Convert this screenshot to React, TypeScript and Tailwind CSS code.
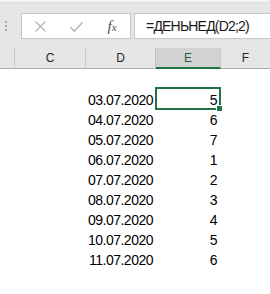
import React from "react";

const dates = [
  "03.07.2020",
  "04.07.2020",
  "05.07.2020",
  "06.07.2020",
  "07.07.2020",
  "08.07.2020",
  "09.07.2020",
  "10.07.2020",
  "11.07.2020",
];
const nums = ["5", "6", "7", "1", "2", "3", "4", "5", "6"];

export default function App() {
  return (
    <div
      className="w-[270px] h-[294px] overflow-hidden bg-white"
      style={{ fontFamily: '"Liberation Sans", Arial, sans-serif' }}
    >
      {/* toolbar */}
      <div className="h-[48px] bg-[#e6e6e6] flex flex-col">
        <div className="h-[2px] bg-[#f3f3f3]" />
        <div className="h-[1px] bg-[#dcdcdc]" />
        <div className="flex items-start pt-[10px]">
          <div className="flex flex-col gap-[2px] pl-[5px] pt-[8px]">
            <div className="w-[2px] h-[2px] bg-[#a8a8a8]" />
            <div className="w-[2px] h-[2px] bg-[#a8a8a8]" />
            <div className="w-[2px] h-[2px] bg-[#a8a8a8]" />
          </div>
          <div className="ml-[14px] w-[110px] h-[26px] bg-white border border-[#c6c6c6] flex items-center">
            <div className="w-[36px] flex justify-center">
              <svg width="11" height="11" viewBox="0 0 11 11">
                <path d="M0.5 0.5 L10.5 10.5 M10.5 0.5 L0.5 10.5" stroke="#b4b4b4" strokeWidth="1.2" fill="none" />
              </svg>
            </div>
            <div className="w-[36px] flex justify-center pt-[2px]">
              <svg width="13" height="10" viewBox="0 0 13 10">
                <path d="M0.6 5.2 L4.3 9.2 L12.4 0.6" stroke="#b4b4b4" strokeWidth="1.5" fill="none" />
              </svg>
            </div>
            <div className="w-[36px] flex justify-center">
              <span
                className="italic text-[#505050] text-[15px] leading-none"
                style={{ fontFamily: '"Liberation Serif", "Times New Roman", serif' }}
              >
                f<span className="text-[11px]">x</span>
              </span>
            </div>
          </div>
          <div className="ml-[3px] flex-1 h-[26px] bg-white border border-r-0 border-[#c6c6c6] flex items-center pl-[11px]">
            <span className="text-[14px] text-[#1a1a1a] tracking-[-0.8px] leading-none">=ДЕНЬНЕД(D2;2)</span>
          </div>
        </div>
      </div>

      {/* column headers */}
      <div className="flex h-[21px] bg-[#e6e6e6] text-[12px] text-[#262626]">
        <div className="w-[15px] shrink-0 border-r border-[#c8c8c8] border-b border-b-[#ababab]" />
        <div className="w-[71px] shrink-0 border-r border-[#c8c8c8] border-b border-b-[#ababab] flex items-center justify-center">C</div>
        <div className="w-[70px] shrink-0 border-r border-[#bdbdbd] border-b border-b-[#ababab] flex items-center justify-center">D</div>
        <div className="w-[65px] shrink-0 bg-[#d2d2d2] border-r border-[#c8c8c8] border-b-2 border-b-[#217346] flex items-center justify-center pt-[1px] text-[#1f5c3a]">E</div>
        <div className="flex-1 border-b border-b-[#ababab] flex items-center justify-center">F</div>
      </div>

      {/* data */}
      <div className="flex flex-col">
        <div className="h-[20px]" />
        {dates.map((d, i) => (
          <div key={d} className="flex h-[20px] text-[14px] text-black tracking-[-0.5px] leading-[22px]">
            <div className="w-[15px] shrink-0" />
            <div className="w-[71px] shrink-0" />
            <div className="w-[70px] shrink-0 text-right pr-[3px]">{d}</div>
            <div className="w-[65px] shrink-0 text-right pr-[4px] relative">
              {nums[i]}
              {i === 0 && (
                <div className="absolute top-[-2px] left-[-1px] right-0 bottom-[-1px] border-2 border-[#217346]">
                  <div className="absolute right-[-4px] bottom-[-4px] w-[7px] h-[7px] bg-[#217346] border border-white" />
                </div>
              )}
            </div>
            <div className="flex-1" />
          </div>
        ))}
      </div>
    </div>
  );
}
